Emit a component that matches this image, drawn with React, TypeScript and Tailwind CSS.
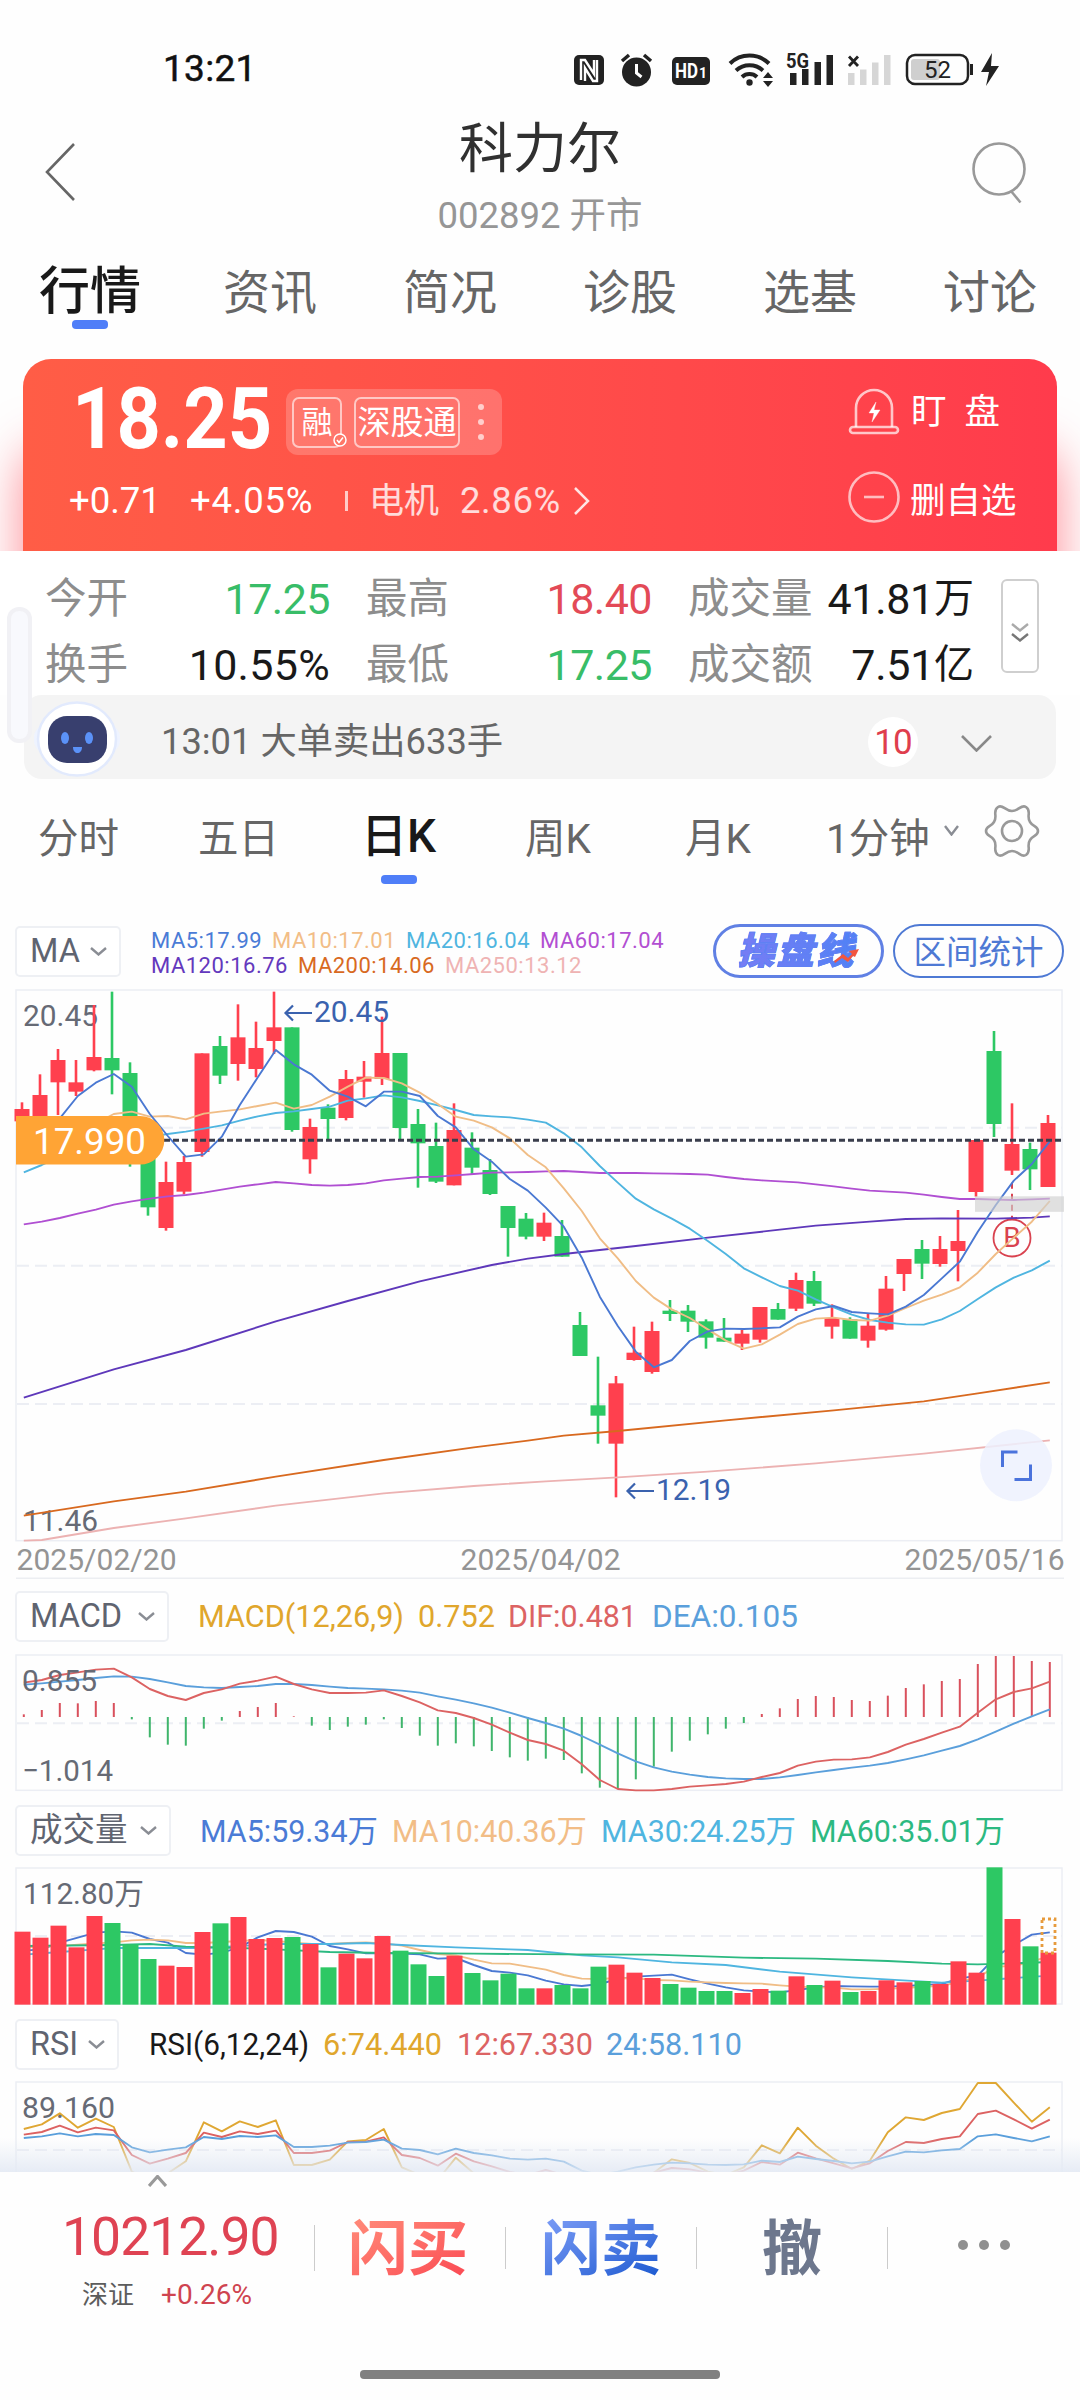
import React from 'react';

const RED = '#ff404e';
const GREEN = '#2dc864';

// Candles: [rising, body top, body bottom, wick top, wick bottom] in thirds of a pixel.
const CANDLES: number[][] = [
  [1, 597, 634, 577, 634], [1, 555, 640, 493, 650], [1, 450, 517, 417, 615], [1, 517, 545, 450, 558],
  [1, 441, 481, 285, 484], [0, 444, 481, 245, 553], [0, 489, 700, 457, 770], [0, 728, 892, 718, 917],
  [1, 816, 954, 755, 962], [1, 756, 845, 738, 853], [1, 430, 726, 430, 740], [0, 408, 497, 378, 522],
  [1, 382, 462, 283, 512], [1, 414, 477, 335, 502], [1, 352, 393, 245, 432], [0, 352, 660, 352, 665],
  [1, 651, 748, 626, 791], [0, 593, 627, 583, 690], [1, 507, 624, 480, 631], [1, 500, 515, 453, 563],
  [1, 429, 507, 320, 525], [0, 429, 654, 429, 690], [0, 642, 700, 597, 833], [0, 708, 815, 638, 819],
  [1, 660, 826, 580, 826], [0, 713, 773, 667, 792], [0, 780, 852, 747, 855], [0, 888, 954, 888, 1040],
  [0, 926, 980, 909, 988], [1, 938, 980, 908, 993], [0, 978, 1040, 930, 1040], [0, 1245, 1338, 1206, 1338],
  [0, 1486, 1517, 1340, 1601], [1, 1420, 1601, 1398, 1762], [1, 1328, 1350, 1250, 1352], [1, 1263, 1386, 1235, 1391],
  [0, 1202, 1212, 1170, 1233], [0, 1202, 1235, 1185, 1266], [0, 1234, 1283, 1228, 1316], [0, 1283, 1295, 1224, 1295],
  [1, 1271, 1301, 1260, 1320], [1, 1191, 1289, 1191, 1298], [0, 1197, 1229, 1179, 1229], [1, 1110, 1196, 1088, 1203],
  [0, 1113, 1181, 1083, 1188], [1, 1224, 1250, 1183, 1286], [0, 1228, 1286, 1222, 1286], [1, 1247, 1292, 1210, 1313],
  [1, 1136, 1259, 1098, 1262], [1, 1047, 1092, 1047, 1143], [0, 1017, 1061, 990, 1107], [1, 1017, 1062, 978, 1070],
  [1, 993, 1023, 900, 1114], [1, 690, 846, 690, 860], [0, 423, 642, 363, 681], [1, 702, 782, 580, 795],
  [0, 717, 778, 698, 840], [1, 639, 831, 615, 831],
];

const MA5 = [735, 690, 625, 558, 518, 492, 530, 612, 678, 740, 733, 680, 585, 502, 420, 463, 494, 542, 560, 589, 545, 545, 558, 618, 652, 718, 755, 807, 842, 893, 950, 1043, 1160, 1248, 1325, 1372, 1350, 1293, 1264, 1256, 1257, 1255, 1252, 1220, 1198, 1188, 1206, 1210, 1213, 1190, 1155, 1105, 1055, 965, 885, 812, 762, 694];
const MA10 = [735, 700, 680, 660, 640, 612, 605, 620, 618, 628, 611, 604, 598, 588, 578, 596, 585, 560, 530, 503, 504, 520, 548, 582, 620, 632, 652, 685, 735, 772, 835, 903, 985, 1045, 1113, 1163, 1198, 1224, 1258, 1292, 1316, 1303, 1274, 1242, 1226, 1223, 1230, 1232, 1217, 1194, 1172, 1154, 1132, 1088, 1032, 983, 935, 873];
const MA20 = [787, 765, 740, 715, 700, 690, 682, 680, 672, 665, 656, 646, 632, 619, 609, 604, 597, 590, 572, 565, 556, 562, 573, 586, 600, 615, 619, 622, 629, 638, 670, 712, 768, 818, 866, 898, 926, 956, 993, 1032, 1075, 1102, 1128, 1142, 1168, 1192, 1214, 1230, 1238, 1243, 1244, 1228, 1203, 1167, 1132, 1103, 1081, 1052];
const MA60 = [943, 935, 924, 911, 899, 884, 874, 866, 859, 855, 848, 839, 830, 823, 816, 820, 825, 827, 825, 820, 811, 806, 801, 800, 796, 792, 788, 787, 786, 784, 783, 786, 789, 789, 789, 790, 791, 792, 794, 801, 807, 811, 814, 817, 823, 829, 836, 842, 845, 848, 854, 861, 867, 867, 869, 870, 868, 866];

// Slow averages as [day index, value] knots.
const MA120 = [[0, 1463], [5, 1378], [9, 1320], [14, 1234], [18, 1173], [22, 1114], [26, 1065], [28, 1046], [30, 1032], [34, 1008], [38, 983], [42, 959], [44, 947], [47, 935], [49, 927], [51, 925], [54, 926], [56, 923], [57, 919]];
const MA200 = [[0, 1817], [5, 1774], [9, 1745], [14, 1700], [20, 1650], [25, 1612], [28, 1592], [30, 1577], [33, 1563], [39, 1531], [45, 1501], [50, 1474], [53, 1450], [57, 1417]];
const MA250 = [[0, 1892], [1, 1890], [5, 1854], [9, 1825], [14, 1787], [20, 1750], [25, 1728], [29, 1714], [33, 1702], [38, 1685], [44, 1660], [50, 1631], [57, 1591]];

const MACD = [403, 390, 369, 370, 363, 369, 418, 472, 494, 497, 446, 422, 393, 381, 369, 409, 437, 450, 440, 434, 418, 444, 467, 497, 490, 499, 513, 532, 542, 536, 540, 580, 623, 626, 598, 560, 515, 482, 463, 446, 429, 402, 385, 357, 348, 351, 360, 363, 347, 324, 313, 303, 297, 252, 228, 228, 243, 246];
const DIF = [308, 300, 285, 277, 269, 266, 292, 327, 348, 360, 339, 328, 311, 302, 290, 312, 328, 339, 339, 338, 331, 348, 367, 391, 399, 414, 434, 458, 480, 492, 512, 553, 600, 627, 631, 631, 627, 620, 616, 612, 605, 591, 579, 557, 545, 539, 538, 532, 516, 494, 477, 458, 440, 398, 358, 336, 325, 305];
const DEA = [314, 310, 305, 300, 294, 289, 290, 297, 307, 318, 322, 324, 321, 318, 312, 312, 315, 320, 324, 326, 328, 332, 338, 349, 359, 370, 383, 398, 414, 429, 446, 468, 494, 520, 544, 562, 575, 584, 591, 595, 597, 597, 592, 585, 577, 570, 563, 557, 549, 538, 526, 512, 498, 478, 455, 431, 409, 388];

const VOL = [215, 233, 197, 262, 168, 189, 253, 297, 317, 321, 216, 190, 171, 237, 234, 231, 252, 322, 281, 295, 228, 272, 313, 348, 287, 339, 361, 341, 385, 385, 375, 385, 320, 314, 338, 354, 372, 383, 393, 393, 399, 387, 392, 349, 375, 362, 396, 393, 361, 367, 363, 372, 304, 338, 22, 177, 259, 278];
const VMA5 = [272, 268, 248, 233, 218, 214, 218, 237, 248, 279, 284, 278, 262, 232, 213, 216, 230, 258, 268, 280, 279, 281, 283, 296, 294, 315, 333, 338, 346, 362, 373, 378, 372, 357, 350, 347, 344, 358, 371, 382, 391, 395, 397, 390, 382, 378, 379, 380, 380, 378, 375, 372, 355, 347, 290, 255, 224, 217];
const VMA10 = [262, 260, 258, 254, 250, 247, 241, 239, 241, 249, 249, 246, 243, 240, 243, 248, 252, 252, 249, 247, 250, 257, 270, 282, 286, 299, 310, 311, 320, 329, 345, 356, 357, 354, 355, 360, 361, 365, 367, 369, 370, 371, 376, 380, 382, 383, 388, 388, 386, 384, 380, 378, 365, 352, 320, 318, 305, 288];
const VMA30 = [[0, 284], [2, 276], [4, 268], [5, 264], [10, 264], [14, 252], [17, 252], [19, 249], [21, 255], [24, 262], [27, 268], [28, 270], [31, 286], [33, 292], [36, 307], [39, 315], [42, 335], [46, 352], [51, 368], [53, 362], [55, 354], [57, 347]];
const VMA60 = [[0, 258], [5, 255], [7, 252], [9, 260], [12, 264], [14, 268], [17, 276], [20, 279], [25, 281], [30, 283], [35, 284], [40, 293], [44, 296], [48, 303], [51, 311], [53, 313], [55, 310], [57, 306]];

const RSI6 = [807, 793, 760, 803, 776, 801, 935, 960, 940, 904, 787, 814, 784, 801, 781, 915, 915, 899, 844, 840, 807, 922, 945, 960, 893, 940, 960, 970, 975, 975, 970, 975, 975, 970, 955, 938, 898, 909, 935, 945, 922, 856, 880, 803, 857, 896, 927, 902, 817, 772, 780, 759, 747, 669, 669, 728, 785, 742];
const RSI12 = [824, 816, 797, 817, 803, 811, 885, 911, 896, 879, 818, 831, 814, 822, 812, 879, 879, 872, 846, 845, 832, 885, 894, 917, 881, 904, 919, 936, 945, 930, 945, 960, 960, 955, 948, 938, 924, 928, 938, 945, 932, 906, 914, 878, 895, 910, 925, 910, 873, 846, 849, 837, 829, 762, 752, 778, 806, 779];
const RSI24 = [834, 829, 820, 829, 822, 825, 862, 877, 869, 862, 831, 837, 828, 831, 826, 861, 861, 857, 848, 846, 839, 866, 870, 883, 866, 879, 886, 896, 899, 896, 905, 932, 945, 935, 922, 914, 908, 910, 914, 915, 913, 902, 906, 890, 897, 903, 910, 905, 889, 875, 877, 871, 867, 829, 823, 834, 844, 829];

const lx = (i: number) => 23.8 + 18 * i;

function Line({ data, top, color }: { data: (number | number[])[]; top: number; color: string }) {
  const points = data
    .map((d, i) => (Array.isArray(d) ? `${lx(d[0])},${(d[1] - top) / 3}` : `${lx(i)},${(d - top) / 3}`))
    .join(' ');
  return <polyline points={points} fill="none" stroke={color} strokeWidth="1.9" strokeLinejoin="round" />;
}

function Grid({ ys, bottom }: { ys: number[]; bottom: number }) {
  return (
    <g stroke="#eceef4" strokeWidth="2" fill="none">
      <rect x="16" y="1" width="1046" height={bottom - 1} strokeWidth="1.5" />
      {ys.map((y) => (
        <line key={y} x1="17" x2="1062" y1={y} y2={y} strokeDasharray="12 6" />
      ))}
    </g>
  );
}

function Label({ x, y, children, w, color = '#666a75', size = 30 }: { x: number; y: number; children: string; w: number; color?: string; size?: number }) {
  return (
    <text x={x} y={y} fontSize={size} fill={color} textLength={w} lengthAdjust="spacingAndGlyphs">
      {children}
    </text>
  );
}

function Chevron({ w = 17, h = 9, color = '#8a8d94', sw = 2.4, up = false }: { w?: number; h?: number; color?: string; sw?: number; up?: boolean }) {
  return (
    <svg width={w} height={h} viewBox={`0 0 ${w} ${h}`} fill="none" stroke={color} strokeWidth={sw} className="shrink-0">
      <path d={up ? `M1 ${h - 1}L${w / 2} 1.5L${w - 1} ${h - 1}` : `M1 1L${w / 2} ${h - 1.5}L${w - 1} 1`} />
    </svg>
  );
}

function Chip({ children, width }: { children: string; width: string }) {
  return (
    <div className={`ml-[15px] flex h-[51px] shrink-0 items-center justify-between rounded-[5px] border-2 border-[#eef0f4] bg-white pr-[12px] pl-[13px] text-[32.5px] leading-none text-[#5f6470] ${width}`}>
      {children}
      <Chevron />
    </div>
  );
}

function StatusBar() {
  return (
    <div className="flex h-[110px] shrink-0 items-start justify-between pt-[50px]">
      <span className="pt-[1px] pl-[163px] text-[37px] leading-9 tracking-[0.3px] text-[#111] [-webkit-text-stroke:0.5px_#111]">13:21</span>
      <svg width="450" height="40" viewBox="560 49 450 40" className="mr-[70px]" fill="#222">
        <rect x="574" y="54" width="30" height="30" rx="5" />
        <path d="M581 79V59l4 0 9 14V59M597 59v21h-4l-8-13v13" fill="none" stroke="#fff" strokeWidth="2.4" />
        <circle cx="636.5" cy="71" r="14.5" />
        <path d="M622 60l7-6M651 60l-7-6" stroke="#222" strokeWidth="3.5" />
        <path d="M636.5 63v9l5 4" stroke="#fff" strokeWidth="3" fill="none" />
        <rect x="672" y="56" width="38" height="28" rx="5" />
        <text x="675" y="77" fontSize="20" fontWeight="700" fill="#fff" textLength="23" lengthAdjust="spacingAndGlyphs">HD</text>
        <text x="699" y="77" fontSize="14" fontWeight="700" fill="#fff">1</text>
        <g fill="none" stroke="#222" strokeWidth="4">
          <path d="M730 62.500a28 28 0 0 1 39 0" />
          <path d="M736 69.500a20 20 0 0 1 27 0" />
          <path d="M742 76a11 11 0 0 1 15 0" />
        </g>
        <circle cx="749.500" cy="81.500" r="3.200" />
        <path d="M768 71l5 6h-10zM768 86l5-6h-10z" />
        <text x="786" y="67" fontSize="20" fontWeight="700" textLength="23" lengthAdjust="spacingAndGlyphs">5G</text>
        <path d="M790 72h6.500v12h-6.500zM802 68h6.500v16h-6.500zM814.500 61h6.500v23h-6.500zM826.500 54h6.500v30h-6.500z" />
        <path d="M849 55.500l9 9.500M858 55.500l-9 9.500" stroke="#222" strokeWidth="2.800" />
        <path d="M848 72h6.500v12h-6.500zM860 68.500h6.500v15.500h-6.500zM872 61.500h6.500v22.500h-6.500zM884 54h6.500v30h-6.500z" fill="#d6d6d6" />
        <rect x="911" y="58" width="29" height="21" rx="3" fill="#cfcfcf" />
        <rect x="907" y="54" width="61" height="29" rx="8" fill="none" stroke="#222" strokeWidth="2.500" />
        <path d="M970 63h3v11h-3z" />
        <text x="924" y="77" fontSize="24" textLength="27" lengthAdjust="spacingAndGlyphs">52</text>
        <path d="M992 52L981 71h8l-3 14 13-20h-8z" />
      </svg>
    </div>
  );
}

function Header() {
  return (
    <div className="grid h-[130px] shrink-0 grid-cols-[1fr_auto_1fr] items-start px-[44px]">
      <svg width="32" height="60" viewBox="0 0 32 60" className="mt-8" fill="none" stroke="#666" strokeWidth="2.6">
        <path d="M30 2L3 30L30 58" />
      </svg>
      <div className="flex flex-col items-center">
        <div className="mt-[13px] h-[57px] text-[54px] leading-[54px] text-[#303030]">科力尔</div>
        <div className="mt-[16px] text-[36.5px] leading-[40px] whitespace-pre text-[#969696]">002892 开市</div>
      </div>
      <svg width="64" height="64" viewBox="0 0 64 64" className="mt-[32px] justify-self-end" fill="none" stroke="#999" strokeWidth="2.6">
        <circle cx="27" cy="27" r="25.500" />
        <path d="M39 49L48.500 60.500" />
      </svg>
    </div>
  );
}

function MainTabs() {
  return (
    <div className="grid h-[119px] shrink-0 grid-cols-6">
      {['行情', '资讯', '简况', '诊股', '选基', '讨论'].map((t, i) => (
        <div key={t} className="flex flex-col items-center">
          <span className={i === 0 ? 'h-20 text-[51px] leading-[104px] font-medium text-[#191919]' : 'h-20 text-[47px] leading-[105px] text-[#666]'}>{t}</span>
          {i === 0 && <span className="h-[9px] w-9 rounded-[4px] bg-[#4f7ef8]" />}
        </div>
      ))}
    </div>
  );
}

function PriceCard() {
  return (
    <div className="h-[192px] shrink-0 overflow-hidden px-[23px]">
      <div className="flex h-[260px] justify-between rounded-[28px] bg-gradient-to-r from-[#ff5d46] to-[#ff3b4c] text-white shadow-[0_90px_50px_rgba(255,60,76,0.6)]">
        <div>
          <div className="flex h-[98px] items-end">
            <span className="mb-[-2px] ml-[49px] w-[214px] origin-left scale-x-[0.9] text-[86px] leading-[80px] font-bold">18.25</span>
            <div className="mb-[2px] flex h-[66px] w-[216px] items-center rounded-[12px] bg-white/20 pl-[6px]">
              <span className="relative flex h-[51px] w-[50px] items-center justify-center rounded-[7px] border-2 border-white/60 text-[31px] leading-none">
                融
                <svg width="14" height="14" viewBox="0 0 14 14" className="absolute -right-[7px] -bottom-[1px]" fill="#ff7767" stroke="#fff" strokeWidth="1.5">
                  <circle cx="7" cy="7" r="6" />
                  <path d="M4 7l2 2.500 4-5" fill="none" />
                </svg>
              </span>
              <span className="ml-3 flex h-[51px] w-[106px] items-center justify-center rounded-[7px] border-2 border-white/60 text-[33px] leading-none">深股通</span>
              <span className="ml-[18px] flex flex-col gap-[9px]">
                {[0, 1, 2].map((k) => (
                  <i key={k} className="h-[6px] w-[6px] rounded-full bg-white/65" />
                ))}
              </span>
            </div>
          </div>
          <div className="mt-[21px] flex h-[46px] items-center text-[36.5px] leading-none whitespace-nowrap">
            <span className="ml-[46px] w-[121px]">+0.71</span>
            <span className="w-[155px] tracking-[0.8px]">+4.05%</span>
            <span className="h-5 w-[3px] bg-white/70" />
            <span className="ml-[21px] w-[91px] text-[35px] text-white/80">电机</span>
            <span className="w-[113px] tracking-[0.6px] text-white/80">2.86%</span>
            <svg width="18" height="30" viewBox="0 0 18 30" fill="none" stroke="#fff" strokeOpacity="0.85" strokeWidth="2.500">
              <path d="M2 2L15 15L2 28" />
            </svg>
          </div>
        </div>
        <div className="w-[210px] pt-[27px] text-[35.5px] leading-none">
          <div className="flex h-[52px] items-center">
            <svg width="54" height="48" viewBox="0 0 54 48" fill="none" stroke="#fff" strokeOpacity="0.7" strokeWidth="2.600">
              <path d="M9 39V20a18 18 0 0 1 36 0v19" />
              <rect x="3" y="39" width="48" height="6" rx="3" />
              <path d="M29 14l-7 11h5l-2 9 8-12h-6z" fill="#fff" strokeWidth="0.500" />
            </svg>
            <span className="ml-[10px] pt-[2px]">盯</span>
            <span className="ml-[18px] pt-[2px]">盘</span>
          </div>
          <div className="mt-[32px] flex h-[54px] items-center">
            <svg width="54" height="54" viewBox="0 0 54 54" fill="none" stroke="#fff" strokeOpacity="0.65" strokeWidth="2.600">
              <circle cx="27" cy="27" r="24.500" />
              <path d="M17 27h20" />
            </svg>
            <span className="ml-[9px] pt-[10px]">删自选</span>
          </div>
        </div>
      </div>
    </div>
  );
}

function Stats() {
  const rows = [
    ['今开', '17.25', 'text-[#38bd68]', '最高', '18.40', '成交量', '41.81', '万'],
    ['换手', '10.55%', 'text-[#191919]', '最低', '17.25', '成交额', '7.51', '亿'],
  ];
  return (
    <div className="relative flex h-[144px] shrink-0 bg-white">
      <div className="w-[974px] pt-[15px]">
        {rows.map((r, i) => (
          <div key={i} className="flex h-[66px] items-center pl-[45px] text-[41.5px] leading-none text-[#8d8d8d]">
            <span className="w-[85px]">{r[0]}</span>
            <span className={`w-[200px] text-right text-[43px] ${i === 0 ? 'tracking-[-0.5px]' : 'tracking-[0.3px]'} ${r[2]}`}>{r[1]}</span>
            <span className="ml-9 w-[86px]">{r[3]}</span>
            <span className={i === 0 ? 'w-[200px] text-right text-[43px] tracking-[-0.5px] text-[#e34a57]' : 'w-[200px] text-right text-[43px] tracking-[-0.5px] text-[#38bd68]'}>{r[4]}</span>
            <span className="ml-[36px] w-[126px]">{r[5]}</span>
            <span className="flex flex-1 items-center justify-end whitespace-nowrap text-[#191919]">
              <span className="text-[43px] tracking-[-0.300px]">{r[6]}</span>
              <span className="text-[40px]">{r[7]}</span>
            </span>
          </div>
        ))}
      </div>
      <div className="mt-7 ml-[27px] flex h-[94px] w-[38px] flex-col items-center justify-center gap-[1px] rounded-[6px] border-[2.500px] border-[#cfcfcf] pt-3">
        <Chevron w={18} h={9} color="#aaa" />
        <Chevron w={18} h={9} color="#777" />
      </div>
      <div className="absolute top-[56px] left-[7px] z-10 h-[136px] w-[25px] rounded-[12px] border-[4px] border-[#efeff2]/80 bg-[#f8f9fd]" />
    </div>
  );
}

function Notice() {
  return (
    <div className="mx-6 flex h-[84px] shrink-0 items-center rounded-[18px] bg-[#f4f4f4]">
      <svg width="88" height="76" viewBox="33 701 88 76" className="mt-[3px] ml-[9px]">
        <rect x="34" y="724" width="86" height="30" rx="14" fill="#eef3ff" />
        <ellipse cx="77" cy="739" rx="39" ry="36.500" fill="#fff" stroke="#e2eafd" strokeWidth="2.500" />
        <rect x="48" y="716" width="59" height="47" rx="19" fill="#383f6e" />
        <ellipse cx="65" cy="738" rx="4" ry="6" fill="#5b92f8" />
        <ellipse cx="89" cy="738" rx="4" ry="6" fill="#5b92f8" />
        <path d="M73 747h9c0 8-9 8-9 0z" fill="#5b92f8" />
      </svg>
      <span className="mt-[11px] ml-[40px] flex-1 text-[36.300px] leading-none text-[#666]">13:01 大单卖出633手</span>
      <span className="mt-[10px] flex h-[50px] w-[50px] items-center justify-center rounded-full bg-white text-[35px] leading-none tracking-[-1px] text-[#df3e4d]">10</span>
      <span className="mt-3 mr-[64px] ml-[43px]">
        <Chevron w={31} h={17} color="#888" sw={2.6} />
      </span>
    </div>
  );
}

function PeriodTabs() {
  return (
    <div className="flex h-[126px] shrink-0 items-start text-[40.500px] leading-none text-[#666]">
      <span className="mt-[40px] ml-[38px] w-[160px]">分时</span>
      <span className="mt-[40px] w-[158px]">五日</span>
      <span className="flex w-[85px] flex-col items-center">
        <span className="mt-[34px] h-[62px] text-[46px] leading-[46px] font-medium text-[#191919]">日K</span>
        <span className="h-[9px] w-9 rounded-[4px] bg-[#4f7ef8]" />
      </span>
      <span className="mt-[40px] ml-[84px] w-[160px]">周K</span>
      <span className="mt-[40px] w-[141px]">月K</span>
      <span className="mt-[40px] w-[118px] whitespace-nowrap">1分钟</span>
      <span className="mt-[46px]">
        <Chevron w={15} h={11} />
      </span>
      <svg width="56" height="56" viewBox="-28 -28 56 56" className="mt-[24px] ml-[25px]" fill="none" stroke="#999" strokeWidth="2.600">
        <circle r="10" />
        <path d="M-14 -24C-9 -27 -7 -20 0 -20C7 -20 9 -27 14 -24C20 -20 14 -15 18 -9C21 -4 26 -5 26 0C26 5 21 4 18 9C14 15 20 20 14 24C9 27 7 20 0 20C-7 20 -9 27 -14 24C-20 20 -14 15 -18 9C-21 4 -26 5 -26 0C-26 -5 -21 -4 -18 -9C-14 -15 -20 -20 -14 -24Z" />
      </svg>
    </div>
  );
}

function MaHeader() {
  return (
    <div className="flex h-[84px] shrink-0 items-start">
      <div className="mt-[21px]">
        <Chip width="w-[106px]">MA</Chip>
      </div>
      <div className="mt-[23px] ml-[30px] w-[562px] text-[22px] leading-[25px] whitespace-nowrap">
        <div className="flex tracking-[0.500px]">
          <span className="w-[121px] text-[#4a7bd6]">MA5:17.99</span>
          <span className="w-[134px] text-[#f2bd86]">MA10:17.01</span>
          <span className="w-[134px] text-[#4fb5e0]">MA20:16.04</span>
          <span className="text-[#b24fd2]">MA60:17.04</span>
        </div>
        <div className="flex tracking-[0.500px]">
          <span className="w-[147px] text-[#6338bd]">MA120:16.76</span>
          <span className="w-[147px] text-[#d8691f]">MA200:14.06</span>
          <span className="text-[#efb3b3]">MA250:13.12</span>
        </div>
      </div>
      <div className="relative mt-[19px] flex h-[54px] w-[171px] items-center justify-center rounded-full border-[3px] border-[#6080e4]">
        <span className="bg-gradient-to-r from-[#7a7cf4] to-[#4a82f6] bg-clip-text pt-[2px] pr-3 pl-2 text-[37px] leading-[44px] font-black tracking-[2.500px] text-transparent italic [-webkit-text-stroke:1px_#6080f4]">操盘线</span>
        <svg width="26" height="16" viewBox="0 0 26 16" className="absolute top-[22px] right-[22px]">
          <path d="M1 12L10 5l5 4 4-4-3-3 10-2-4 8-2-1-5 6-6-4-7 5z" fill="#f2553f" />
        </svg>
      </div>
      <div className="mt-[19px] ml-[9px] flex h-[54px] w-[171px] items-center justify-center rounded-full border-2 border-[#4e79d4] pt-1 text-[32.500px] leading-none text-[#4e79d4]">区间统计</div>
    </div>
  );
}

function PriceChart() {
  const T = 237;
  const y = (v: number) => (v - T) / 3;
  return (
    <svg width="1080" height="590" viewBox="0 0 1080 590" className="shrink-0">
      <Grid ys={[y(653), y(1067), y(1482)]} bottom={y(1892)} />
      <line x1="16" x2="1064" y1="589.300" y2="589.300" stroke="#eceef2" strokeWidth="1.500" />
      <Label x={23} y={37.200} w={75}>20.45</Label>
      <Label x={23} y={542.200} w={75}>11.46</Label>
      {CANDLES.map(([up, bt, bb, wt, wb], i) => (
        <g key={i} fill={up ? RED : GREEN}>
          <rect x={20.7 + 18 * i} y={y(wt)} width="2.600" height={(wb - wt) / 3} />
          <rect x={14.500 + 18 * i} y={y(bt)} width="15" height={(bb - bt) / 3} />
        </g>
      ))}
      <line x1="1012" x2="1012" y1={y(818)} y2={y(925)} stroke="#d9424f" strokeWidth="2" strokeDasharray="6 5" />
      <circle cx="1012" cy="249" r="18.500" fill="none" stroke="#d9424f" strokeWidth="1.800" />
      <text x="1012" y="258" fontSize="28" fill="#d9424f" textAnchor="middle">B</text>
      <Line data={MA250} top={T} color="#ecb2b2" />
      <Line data={MA200} top={T} color="#d8691f" />
      <Line data={MA120} top={T} color="#5e38ba" />
      <Line data={MA60} top={T} color="#b04fd2" />
      <Line data={MA20} top={T} color="#4fb5e0" />
      <Line data={MA10} top={T} color="#f0bd86" />
      <Line data={MA5} top={T} color="#4a78d2" />
      <rect x="975" y={y(859)} width="89" height="15.500" fill="#cfcfcf" fillOpacity="0.650" />
      <line x1="155" x2="1061" y1={y(691)} y2={y(691)} stroke="#3a3e4c" strokeWidth="3" strokeDasharray="6 3" />
      <path d={`M16 ${y(618)}H140a24.300 24.300 0 0 1 0 48.600H16z`} fill="#ffa435" />
      <Label x={33} y={y(731)} w={113} color="#fff" size={37.5}>17.990</Label>
      <g stroke="#3a62ae" strokeWidth="2.200" fill="none">
        <path d="M293 16.500l-7.500 7.500 7.500 7.500M286 24h26" />
        <path d="M635 494.500l-7.500 7.500 7.500 7.500M628 502h26" />
      </g>
      <Label x={314} y={33.200} w={75} color="#3a62ae">20.45</Label>
      <Label x={656} y={511} w={75} color="#3a62ae">12.19</Label>
      <circle cx="1016" cy="476.300" r="36" fill="#edf1fe" fillOpacity="0.850" />
      <path d="M1002.500 478v-15h15M1030.500 475.500v15h-16" fill="none" stroke="#4b73dc" strokeWidth="3" />
      <g fill="#949494">
        <text x="16.500" y="581" fontSize="30" textLength="160">2025/02/20</text>
        <text x="460.500" y="581" fontSize="30" textLength="160">2025/04/02</text>
        <text x="904.500" y="581" fontSize="30" textLength="160">2025/05/16</text>
      </g>
    </svg>
  );
}

function IndicatorHeader({ name, first, items, height, chip }: { name: string; first: number; items: [string, string, number, number][]; height: string; chip: string }) {
  return (
    <div className={`relative flex shrink-0 items-center ${height}`}>
      <Chip width={chip}>{name}</Chip>
      <svg width={1080 - first} height="50" viewBox={`${first} 0 ${1080 - first} 50`} className="absolute top-3 right-0">
        {items.map(([t, c, x, w], i) => (
          <text key={i} x={x} y="35.700" fontSize="30.500" fill={c} textLength={w} lengthAdjust="spacingAndGlyphs">{t}</text>
        ))}
      </svg>
    </div>
  );
}

function MacdChart() {
  const T = 222;
  return (
    <svg width="1080" height="140" viewBox="0 0 1080 140" className="shrink-0">
      <Grid ys={[(430 - T) / 3]} bottom={(631 - T) / 3} />
      {MACD.map((v, i) => (
        <rect key={i} x={lx(i) - 1} y={(Math.min(v, 411) - T) / 3} width="2" height={Math.abs(v - 411) / 3} fill={v < 411 ? '#d9505c' : '#3fb56b'} />
      ))}
      <Line data={DEA} top={T} color="#5a9fdb" />
      <Line data={DIF} top={T} color="#dc6262" />
      <Label x={22} y={37} w={75}>0.855</Label>
      <Label x={22} y={127.300} w={91}>−1.014</Label>
    </svg>
  );
}

function VolumeChart() {
  const T = 21;
  return (
    <svg width="1080" height="140" viewBox="0 0 1080 140" className="shrink-0">
      <Grid ys={[(228 - T) / 3]} bottom={(432 - T) / 3} />
      <Line data={VMA5} top={T} color="#4a78d2" />
      <Line data={VMA10} top={T} color="#f0bd86" />
      <Line data={VMA30} top={T} color="#4fb5e0" />
      <Line data={VMA60} top={T} color="#2cb981" />
      {VOL.map((v, i) => (
        <rect key={i} x={14.500 + 18 * i} y={(v - T) / 3} width="16" height={(434 - v) / 3} fill={CANDLES[i][0] ? RED : GREEN} />
      ))}
      <rect x="1042" y="52" width="13" height="34" fill="none" stroke="#e79b3c" strokeWidth="2.800" strokeDasharray="3 3" />
      <Label x={23} y={37.300} w={121}>112.80万</Label>
    </svg>
  );
}

function RsiChart() {
  const T = 663;
  return (
    <div className="relative h-[91px] shrink-0 overflow-hidden">
      <svg width="1080" height="91" viewBox="0 0 1080 91">
        <Grid ys={[(870 - T) / 3]} bottom={120} />
        <Line data={RSI6} top={T} color="#dfa733" />
        <Line data={RSI12} top={T} color="#dc6262" />
        <Line data={RSI24} top={T} color="#5a9fdb" />
        <Label x={22} y={37} w={93}>89.160</Label>
      </svg>
      <div className="absolute inset-x-0 bottom-0 h-[34px] bg-gradient-to-b from-[#e4eaf4]/0 to-[#e4eaf4]/90" />
    </div>
  );
}

function BottomBar() {
  return (
    <div className="flex flex-1 flex-col items-center bg-[#fefefe]">
      <div className="flex h-[198px] w-full">
        <div className="flex w-[314px] flex-col">
          <div className="flex h-[15px] items-end pl-[148px]">
            <Chevron w={19} h={12} up color="#999" sw={3.2} />
          </div>
          <div className="mt-[23px] pl-[62px] text-[53.500px] leading-[53px] tracking-[-1px] text-[#df4353]">10212.90</div>
          <div className="mt-[15px] flex h-[34px] items-center pl-[82px] text-[26px] leading-none">
            <span className="w-[79px] text-[#5c5c5c]">深证</span>
            <span className="text-[28px] text-[#cf4450]">+0.26%</span>
          </div>
        </div>
        <div className="flex h-[152px] flex-1 items-center text-[60px] leading-[64px] font-bold">
          <i className="h-[46px] w-px bg-[#ccc]" />
          <span className="flex w-[190px] justify-center pt-1 pr-[4px]">
            <span className="bg-gradient-to-br from-[#ff8b7a] to-[#fa4552] bg-clip-text text-transparent">闪买</span>
          </span>
          <i className="h-[42px] w-px bg-[#ccc]" />
          <span className="flex w-[190px] justify-center pt-1">
            <span className="bg-gradient-to-br from-[#7c9cf6] to-[#1557cf] bg-clip-text text-transparent">闪卖</span>
          </span>
          <i className="h-[42px] w-px bg-[#ccc]" />
          <span className="w-[190px] pt-1 text-center text-[#6d778d]">撤</span>
          <i className="h-[42px] w-px bg-[#ccc]" />
          <span className="mb-[7px] flex flex-1 items-center justify-center gap-[11px] pr-[1px]">
            {[0, 1, 2].map((k) => (
              <i key={k} className="h-[10px] w-[10px] rounded-full bg-[#909090]" />
            ))}
          </span>
        </div>
      </div>
      <div className="h-[9px] w-[360px] rounded-[4px] bg-[#808080]" />
    </div>
  );
}

export default function App() {
  return (
    <div className="flex h-[2400px] w-[1080px] flex-col overflow-hidden bg-[#fefefe] font-[Roboto,'Noto_Sans_CJK_SC',sans-serif]">
      <StatusBar />
      <Header />
      <MainTabs />
      <PriceCard />
      <Stats />
      <Notice />
      <PeriodTabs />
      <MaHeader />
      <PriceChart />
      <IndicatorHeader
        name="MACD"
        chip="w-[154px]"
        first={190}
        height="h-[75px]"
        items={[['MACD(12,26,9)', '#e0a62c', 198, 206], ['0.752', '#e0a62c', 418, 77], ['DIF:0.481', '#dc6363', 508, 129], ['DEA:0.105', '#5a9fdb', 652, 146]]}
      />
      <MacdChart />
      <IndicatorHeader
        name="成交量"
        chip="w-[156px]"
        first={190}
        height="h-[73px]"
        items={[['MA5:59.34万', '#4a7bd6', 200, 178], ['MA10:40.36万', '#f2bd86', 392, 195], ['MA30:24.25万', '#4fb5e0', 601, 195], ['MA60:35.01万', '#2cb981', 810, 195]]}
      />
      <VolumeChart />
      <IndicatorHeader
        name="RSI"
        chip="w-[104px]"
        first={140}
        height="h-[74px]"
        items={[['RSI(6,12,24)', '#191919', 149, 160], ['6:74.440', '#e0a62c', 323, 119], ['12:67.330', '#dc6363', 457, 136], ['24:58.110', '#5a9fdb', 606, 136]]}
      />
      <RsiChart />
      <BottomBar />
    </div>
  );
}
